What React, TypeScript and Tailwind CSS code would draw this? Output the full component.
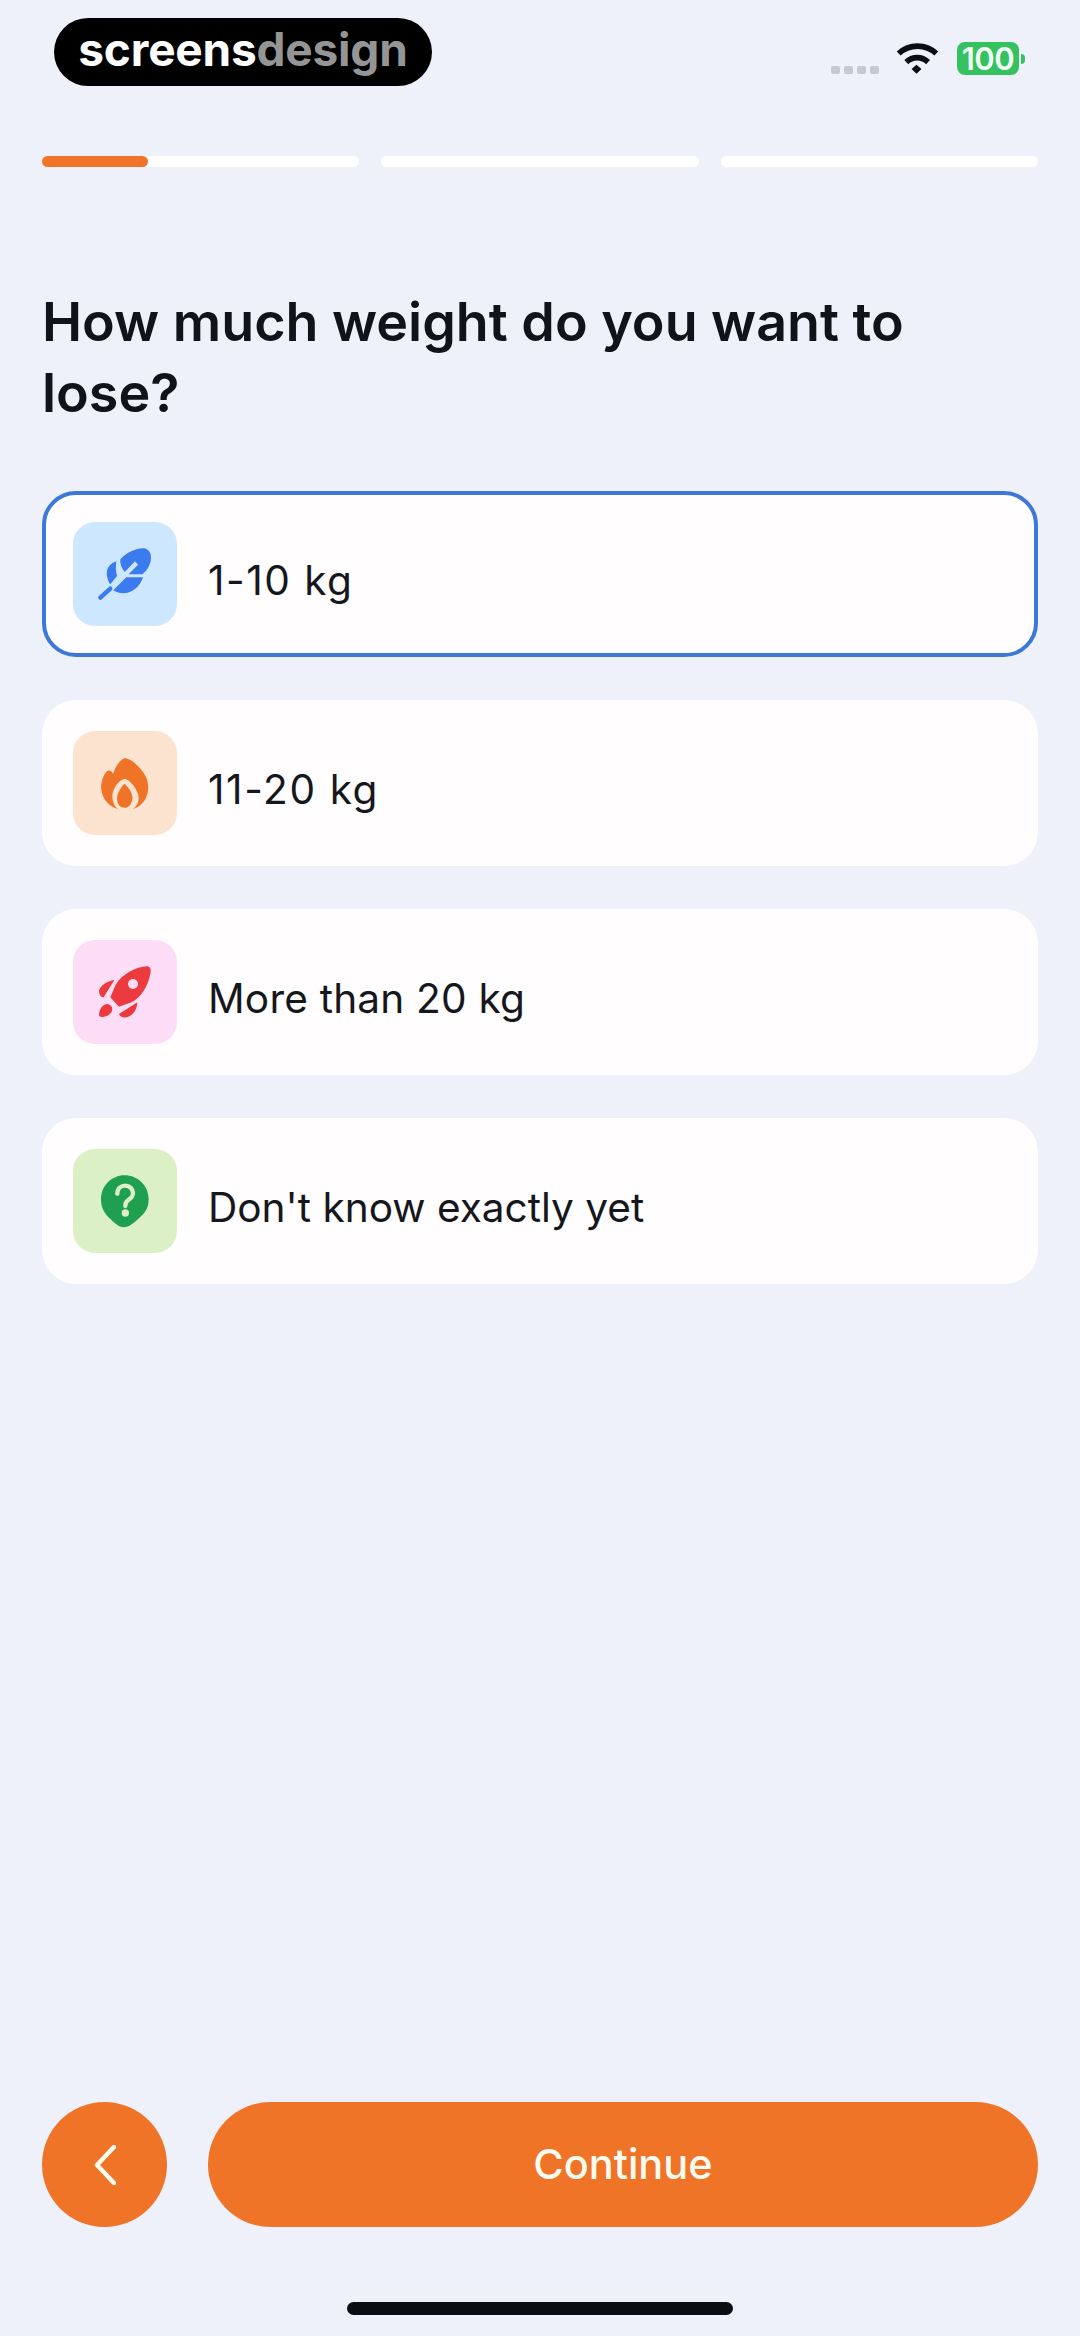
import { ReactNode } from "react";

const fontStack = { fontFamily: "Inter, 'Noto Sans', sans-serif" };

function FeatherIcon() {
  return (
    <svg viewBox="130 128 312 312" className="h-full w-full">
      <g fill="#3B7BEF">
        <path d="M272 240C290 218 325 205 343 207C360 210 367 225 363 245C358 265 350 275 338 285L297 285L325 256L316 246L285 278C275 265 270 252 272 240Z" />
        <path d="M260 246C240 252 228 270 232 290C234 302 238 312 242 315L262 290C258 275 258 260 260 246Z" />
        <path d="M340 294L290 294L251 333C270 345 295 345 315 330C328 320 335 308 340 294Z" />
      </g>
      <path d="M212 355L242 328" stroke="#3B7BEF" strokeWidth="13" strokeLinecap="round" />
    </svg>
  );
}

function FlameIcon() {
  return (
    <svg viewBox="130 122 312 312" className="h-full w-full">
      <g fill="#F07427">
        <path d="M285 203C305 205 325 225 340 245C355 265 360 290 352 315C345 335 330 350 310 356C325 345 330 330 325 310C318 290 300 268 285 265C265 270 250 295 248 315C248 335 255 350 265 356C240 350 220 330 215 300C212 280 220 255 232 243C238 238 245 240 250 250C255 240 262 215 285 203Z" />
        <path d="M285 280C300 295 310 310 308 325C305 345 295 352 285 352C272 352 262 342 262 325C262 310 272 292 285 280Z" />
      </g>
    </svg>
  );
}

function RocketIcon() {
  return (
    <svg viewBox="130 118 312 312" className="h-full w-full">
      <g fill="#EB3B3F">
        <path d="M352 197C362 198 365 205 362 220C355 255 335 290 305 305L268 318L242 290L258 252C275 222 320 197 352 197Z" />
        <path d="M254 238C232 241 212 255 208 270C208 283 215 290 222 290Z" />
        <path d="M232 310C245 312 252 322 245 335C235 350 215 352 208 345C208 330 215 312 232 310Z" />
        <path d="M323 305C322 325 312 345 290 350C280 352 270 347 268 340Z" />
      </g>
      <circle cx="310" cy="250" r="15" fill="#FDDCF5" />
    </svg>
  );
}

function QuestionIcon() {
  return (
    <svg viewBox="130 114 312 312" className="h-full w-full">
      <path
        d="M285 193C325 193 357 225 357 265C357 292 345 307 328 322C312 336 298 349 282 349C268 349 255 336 240 322C225 308 214 292 214 265C214 225 245 193 285 193Z"
        fill="#1FA04F"
      />
      <path
        d="M263 248C263 232 275 224 287 224C300 224 310 234 310 247C310 258 302 263 295 268C289 272 287 277 287 285"
        fill="none"
        stroke="#DCF0C6"
        strokeWidth="13"
        strokeLinecap="round"
      />
      <circle cx="287" cy="306" r="11" fill="#DCF0C6" />
    </svg>
  );
}

function WifiIcon() {
  return (
    <svg viewBox="290 65 130 100" className="h-[33px] w-[43px]">
      <g fill="none" stroke="#0B0D12" strokeWidth="17">
        <path d="M298 100C330 70 380 70 412 100" />
        <path d="M321 126C340 108 368 108 387 126" />
      </g>
      <path d="M337 147L352 134L367 147L352 161Z" fill="#0B0D12" />
    </svg>
  );
}

function Option({
  label,
  boxClass,
  labelClass,
  selected,
  icon,
}: {
  label: string;
  boxClass: string;
  labelClass?: string;
  selected?: boolean;
  icon: ReactNode;
}) {
  return (
    <div
      className={`flex h-[166px] items-center gap-[31px] rounded-[34px] bg-[#FFFDFE] ${
        selected ? "border-[4px] border-[#3B78D8] pl-[27px]" : "pl-[31px]"
      }`}
    >
      <div className={`h-[104px] w-[104px] shrink-0 rounded-[22px] ${boxClass}`}>{icon}</div>
      <span className={`mt-[13px] text-[40.6px] leading-[50px] text-[#15171C] ${labelClass ?? ""}`}>{label}</span>
    </div>
  );
}

export default function App() {
  return (
    <div className="flex h-[2336px] flex-col bg-[#EEF1FA]" style={fontStack}>
      {/* status bar */}
      <div className="flex items-start justify-between pl-[54px] pr-[55px] pt-[18px]">
        <div className="flex h-[68px] w-[378px] items-center justify-center rounded-[34px] bg-black pb-[6px] text-[46px] font-bold leading-none tracking-[-0.2px]">
          <span className="text-white">screens</span>
          <span className="text-[#959595]">design</span>
        </div>
        <div className="flex items-center pt-[24px]">
          <div className="mt-[22px] flex gap-[4px]">
            <div className="h-[8px] w-[9px] rounded-[2px] bg-[#C4C8D2]" />
            <div className="h-[8px] w-[9px] rounded-[2px] bg-[#C4C8D2]" />
            <div className="h-[8px] w-[9px] rounded-[2px] bg-[#C4C8D2]" />
            <div className="h-[8px] w-[9px] rounded-[2px] bg-[#C4C8D2]" />
          </div>
          <div className="ml-[17px]">
            <WifiIcon />
          </div>
          <div className="ml-[18px] flex h-[33px] w-[62px] items-center justify-center rounded-[8px] bg-[#35C15F] text-[31px] font-semibold leading-none tracking-[-0.5px] text-[#F2FFF4]">
            100
          </div>
          <div className="ml-[2px] h-[10px] w-[4px] rounded-r-full bg-[#35C15F]" />
        </div>
      </div>

      {/* progress */}
      <div className="mt-[70px] flex gap-[22px] px-[42px]">
        <div className="h-[11px] flex-1 rounded-full bg-white">
          <div className="h-full w-[106px] rounded-full bg-[#F07427]" />
        </div>
        <div className="h-[11px] flex-1 rounded-full bg-white" />
        <div className="h-[11px] flex-1 rounded-full bg-white" />
      </div>

      <h1 className="mt-[119px] px-[42px] text-[53.8px] font-semibold leading-[71px] text-[#101319]">
        How much weight do you want to lose?
      </h1>

      <div className="mt-[63px] flex flex-col gap-[43px] px-[42px]">
        <Option label="1-10 kg" boxClass="bg-[#CCE7FF]" labelClass="tracking-[1.5px]" selected icon={<FeatherIcon />} />
        <Option label="11-20 kg" boxClass="bg-[#FBE3CF]" labelClass="tracking-[1.6px]" icon={<FlameIcon />} />
        <Option label="More than 20 kg" boxClass="bg-[#FDDCF5]" labelClass="tracking-[0.2px]" icon={<RocketIcon />} />
        <Option label="Don't know exactly yet" boxClass="bg-[#DCF0C6]" icon={<QuestionIcon />} />
      </div>

      {/* bottom actions */}
      <div className="mt-auto flex gap-[41px] px-[42px]">
        <button
          type="button"
          className="flex h-[125px] w-[125px] shrink-0 items-center justify-center rounded-full bg-[#F07427]"
        >
          <svg viewBox="0 0 22 40" className="h-[40px] w-[22px]">
            <path
              d="M20 2L3 20L20 38"
              fill="none"
              stroke="#FFFBF0"
              strokeWidth="4.5"
              strokeLinecap="round"
              strokeLinejoin="round"
            />
          </svg>
        </button>
        <button
          type="button"
          className="flex h-[125px] flex-1 items-center justify-center rounded-full bg-[#F07427] text-[41.5px] font-medium text-[#FFFBF0]"
        >
          Continue
        </button>
      </div>

      <div className="flex justify-center pb-[21px] pt-[75px]">
        <div className="h-[13px] w-[386px] rounded-full bg-[#0B0D12]" />
      </div>
    </div>
  );
}
